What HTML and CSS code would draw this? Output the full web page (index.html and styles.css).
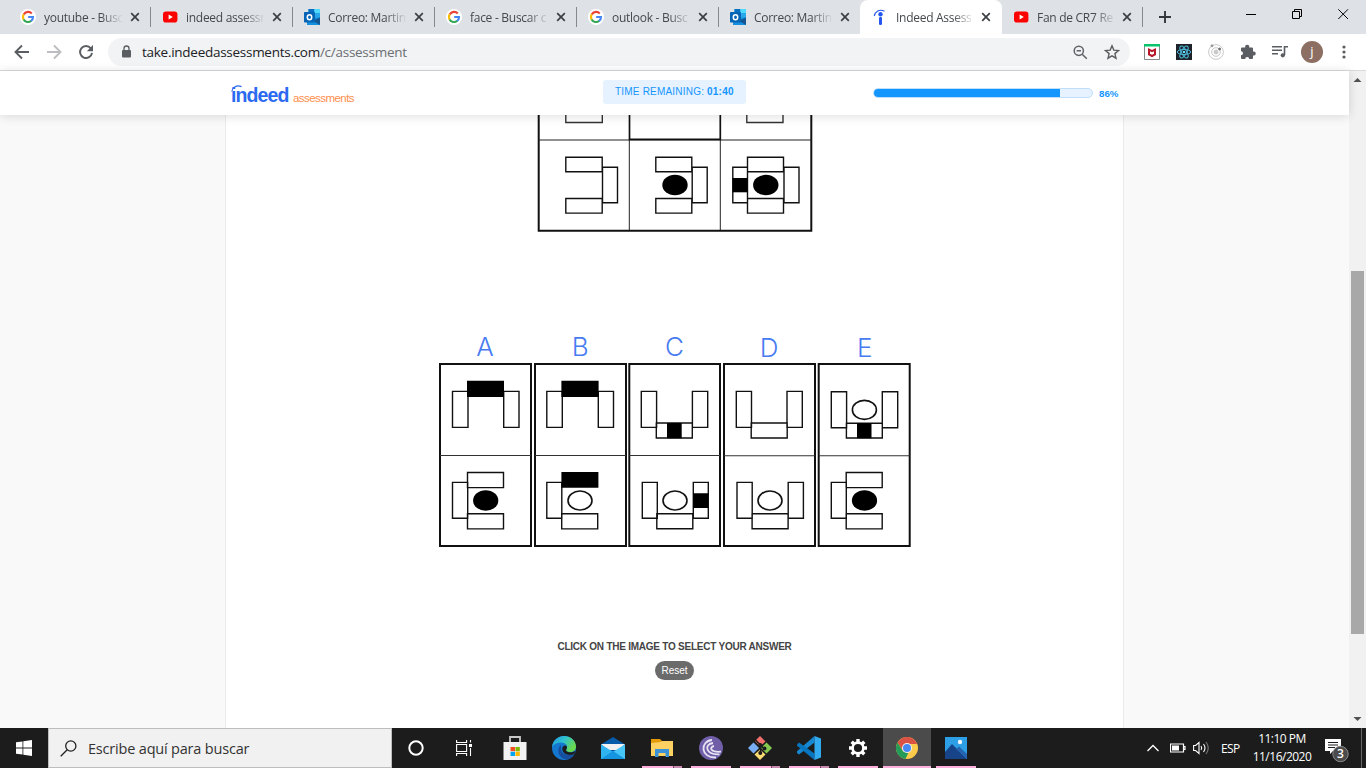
FILE: index.html
```html
<!DOCTYPE html>
<html lang="es">
<head>
<meta charset="utf-8">
<title>Indeed Assessments</title>
<link rel="stylesheet" href="styles.css">
</head>
<body>
<svg class="defs" width="0" height="0">
  <symbol id="google" viewBox="0 0 16 16">
    <circle cx="8" cy="8" r="8" fill="#fff"/>
    <g fill="none" stroke-width="2.1">
      <path d="M11.8 4.5A5 5 0 0 0 3.7 5.5" stroke="#ea4335"/>
      <path d="M3.7 5.4a5 5 0 0 0 0 5.2" stroke="#fbbc05"/>
      <path d="M3.6 10.4a5 5 0 0 0 7.7 1.4" stroke="#34a853"/>
      <path d="M8.2 8H13a5 5 0 0 1-1.9 4" stroke="#4285f4"/>
    </g>
  </symbol>
  <symbol id="youtube" viewBox="0 0 16 16">
    <rect x="1" y="2.6" width="14.4" height="11" rx="2.8" fill="#f00"/>
    <path d="M6.6 5.6v5L10.8 8.1z" fill="#fff"/>
  </symbol>
  <symbol id="outlook" viewBox="0 0 16 16">
    <path d="M4.5 0H16v13H4.5z" fill="#28a8ea"/>
    <path d="M4.5 0h6v4h-6z" fill="#0a6fc2"/><path d="M10.300 0H16v4h-5.700z" fill="#50d9ff"/>
    <path d="M4.500 4h6v4h-6z" fill="#0364b8"/>
    <path d="M3 8.500h13V16H3z" fill="#1490df"/><path d="M16 8.500V16L8.500 11.800z" fill="#123b6d" opacity=".65"/>
    <rect x="0" y="3" width="11" height="10.500" rx=".8" fill="#0664b5"/>
    <ellipse cx="5.500" cy="8.200" rx="2.200" ry="2.500" fill="none" stroke="#fff" stroke-width="1.500"/>
  </symbol>
  <symbol id="indeed" viewBox="0 0 16 16">
    <g fill="#2557f0"><circle cx="8.500" cy="5.200" r="2.200"/><rect x="7" y="8" width="3" height="8" rx="1.200"/></g>
    <path d="M2.300 7C3 2.500 7.500-.3 12.500 2.200" fill="none" stroke="#2557f0" stroke-width="1.200"/>
  </symbol>
  <symbol id="close" viewBox="0 0 10 10"><path d="M1.200 1.200l7.600 7.600M8.800 1.200L1.200 8.800" stroke="#3c4043" stroke-width="1.700" fill="none"/></symbol>
</svg>

<div class="tabstrip">
  <div class="tab"><svg class="favicon"><use href="#google"/></svg><span class="title">youtube - Busc</span><svg class="x"><use href="#close"/></svg></div>
  <div class="tab"><svg class="favicon"><use href="#youtube"/></svg><span class="title">indeed assessn</span><svg class="x"><use href="#close"/></svg></div>
  <div class="tab"><svg class="favicon"><use href="#outlook"/></svg><span class="title">Correo: Martin</span><svg class="x"><use href="#close"/></svg></div>
  <div class="tab"><svg class="favicon"><use href="#google"/></svg><span class="title">face - Buscar c</span><svg class="x"><use href="#close"/></svg></div>
  <div class="tab"><svg class="favicon"><use href="#google"/></svg><span class="title">outlook - Busc</span><svg class="x"><use href="#close"/></svg></div>
  <div class="tab plain"><svg class="favicon"><use href="#outlook"/></svg><span class="title">Correo: Martin</span><svg class="x"><use href="#close"/></svg></div>
  <div class="tab active"><svg class="favicon"><use href="#indeed"/></svg><span class="title">Indeed Assess</span><svg class="x"><use href="#close"/></svg></div>
  <div class="tab last"><svg class="favicon"><use href="#youtube"/></svg><span class="title">Fan de CR7 Re</span><svg class="x"><use href="#close"/></svg></div>
  <svg class="newtab" viewBox="0 0 12 12"><path d="M6 0v12M0 6h12" stroke="#35383b" stroke-width="1.900"/></svg>
  <div class="winbtns">
    <svg width="46" height="30" fill="none" stroke="#000"><path d="M18 14.500h10"/></svg>
    <svg width="46" height="30" fill="none" stroke="#000"><path d="M18.500 11.500h7v7h-7zM20.500 11.500v-2h7v7h-2"/></svg>
    <svg width="46" height="30" fill="none" stroke="#000"><path d="M18.300 9.300l9.700 9.700M28 9.300L18.300 19"/></svg>
  </div>
</div>

<div class="toolbar">
  <svg class="nav" width="96" height="36" viewBox="0 0 96 36" fill="none" stroke="#5a5d61" stroke-width="1.900">
    <path d="M29 18H16M22 11.500L15.500 18l6.500 6.500"/>
    <path d="M47 18h13M54 11.500l6.500 6.500-6.500 6.500" stroke="#bcbec1"/>
    <path d="M90.800 14.300A6 6 0 1 0 92 18.800"/><path d="M93 11v6.200h-6.200z" fill="#5a5d61" stroke="none"/>
  </svg>
  <div class="omnibox">
    <svg width="10" height="14" viewBox="0 0 10 14"><rect x="0" y="5" width="9" height="7.500" rx="1" fill="#5a5d61"/><path d="M2 5.500V3.500a2.500 2.500 0 0 1 5 0v2" fill="none" stroke="#5a5d61" stroke-width="1.300"/></svg>
    <span class="url">take.indeedassessments.com<i>/c/assessment</i></span>
    <svg class="zoomout" width="15" height="15" viewBox="0 0 15 15" fill="none" stroke="#5f6368" stroke-width="1.500"><circle cx="5.800" cy="5.800" r="4.600"/><path d="M9.200 9.200l4.600 4.600M3.600 5.800h4.400"/></svg>
    <svg class="star" width="16" height="16" viewBox="0 0 16 16" fill="none" stroke="#5a5d61" stroke-width="1.400"><path d="M8 1.800l1.800 4.300 4.700.4-3.600 3.100 1.100 4.600L8 11.800l-4 2.400 1.100-4.600-3.600-3.100 4.700-.4z"/></svg>
  </div>
  <div class="extensions">
    <svg width="16" height="16" viewBox="0 0 16 16"><path d="M.5 1v14.500h15V1" fill="#fff" stroke="#888"/><path d="M0 0h16v2.500H0z" fill="#08c46a"/><path d="M4 4l4 2 4-2v7l-4 2.300L4 11z" fill="#b9182b"/><path d="M6 7.200l2 1 2-1v2.600l-2 1-2-1z" fill="#fff"/></svg>
    <svg width="16" height="16" viewBox="0 0 16 16"><path d="M0 0h16v16H0z" fill="#1e2229"/><g fill="none" stroke="#4bb8da" stroke-width="1"><ellipse cx="8" cy="8" rx="6.700" ry="2.600"/><ellipse cx="8" cy="8" rx="6.700" ry="2.600" transform="rotate(60 8 8)"/><ellipse cx="8" cy="8" rx="6.700" ry="2.600" transform="rotate(120 8 8)"/></g><circle cx="8" cy="8" r="1.300" fill="#61dafb"/></svg>
    <svg width="16" height="16" viewBox="0 0 16 16" fill="none" stroke="#c9c9c9"><circle cx="8" cy="8" r="7.400"/><circle cx="8" cy="8" r="4.300"/><circle cx="8" cy="8" r="2" fill="#c9c9c9"/><circle cx="11.600" cy="5" r="1" fill="#666" stroke="#777"/><circle cx="4" cy="1.800" r="1" fill="#888" stroke="#999"/></svg>
    <svg width="16" height="16" viewBox="0 0 16 16" fill="#5a5d61"><path d="M1 4.500a1 1 0 0 1 1-1h3.200a2.100 2.100 0 1 1 4 0H12a1 1 0 0 1 1 1v3a2.100 2.100 0 1 1 0 4V14a1 1 0 0 1-1 1H9.200a2 2 0 1 0-4 0H2a1 1 0 0 1-1-1v-2.800a2 2 0 1 0 0-4z"/></svg>
    <svg width="16" height="16" viewBox="0 0 16 16" fill="none" stroke="#5a5d61" stroke-width="1.600"><path d="M0 2.800h10M0 6.300h10M0 9.800h6M12.500 11V2.800H16"/><circle cx="10.800" cy="11.300" r="2.100" fill="#5a5d61" stroke="none"/></svg>
    <span class="avatar">j</span>
    <svg class="dots" width="4" height="14" viewBox="0 0 4 14" fill="#5a5d61"><circle cx="2" cy="2" r="1.600"/><circle cx="2" cy="7" r="1.600"/><circle cx="2" cy="12" r="1.600"/></svg>
  </div>
</div>

<div class="viewport">
  <div class="page">
    <header class="topbar">
      <div class="logo"><svg class="swoosh" width="12" height="7" viewBox="0 0 12 7"><path d="M.7 6.500C1.500 2 5.500-.2 10.500 1.600" fill="none" stroke="#2a6af0" stroke-width="1.200"/></svg><b>indeed</b><span>assessments</span></div>
      <div class="timer">TIME REMAINING: <b>01:40</b></div>
      <div class="progress"><div class="track"><div class="fill" style="width:85.500%"></div></div><b>86%</b></div>
    </header>
    <main class="card">
      <svg class="matrix" width="280" height="119" viewBox="535 115 280 119" fill="none" stroke="#111" stroke-width="1.400">
        <path d="M538.700 114v116.700h272.600V114" stroke-width="2"/>
        <path d="M538 140h274M629.300 140v90M720.300 140v90" stroke="#222" stroke-width="1"/>
        <path d="M629.500 114v25.300h90.800V114" stroke-width="1.700"/>
        <path d="M565.800 114v8.500h36.500V114M746.800 114v8.500H783V114" stroke="#333"/>
        <path d="M565.800 157.200h36.400v14.500h-36.400zM602.500 167.200h15v35.500h-15zM565.800 198.500h36.400v14.600h-36.400z"/>
        <path d="M655.800 157.200h36v14.500h-36zM692.200 167.200h15v35.500h-15zM655.800 198.500h36v14.600h-36z"/>
        <path d="M747.500 157.200h36v14.500h-36zM784 167.200h15v35.500h-15zM747.500 198.500h36v14.600h-36zM732.800 167.200h14.700v35.500h-14.700z"/>
        <g fill="#000" stroke="none"><ellipse cx="675" cy="185" rx="12.700" ry="10.200"/><ellipse cx="765.800" cy="185" rx="12.700" ry="10.200"/><path d="M732.500 178h15v14.300h-15z"/></g>
      </svg>
      <svg class="answers" width="480" height="220" viewBox="435 330 480 220" fill="none" stroke="#111" stroke-width="1.400">
        <g class="letters" stroke="none" text-anchor="middle"><text x="485" y="356">A</text><text x="580.300" y="356">B</text><text x="674.500" y="356">C</text><text x="769" y="356.500">D</text><text x="864.800" y="356.500">E</text></g>
        <path d="M440 364h91v182h-91zM535 364h91v182h-91zM629.300 364h90.700v182h-90.700zM724 364h91v182h-91zM818.700 364h91v182h-91z" stroke-width="2"/>
        <path d="M440 455.500h91M535 455.500h91M629.300 455.500H720M724 455.800h91M818.700 455.800h91" stroke="#333" stroke-width="1.100"/>
        <path d="M452.500 391.400H468v36h-15.500zM503.700 391.400H519v36h-15.300zM452.500 482.400h15.200v35.900h-15.200zM467.500 472.500h36v15.100h-36zM467.500 513.700h36v15.200h-36z"/>
        <path d="M546.800 391.400h15.500v36h-15.500zM598.300 391.400h15.200v36h-15.200zM546.800 482.400h15v35.900h-15zM561.700 513.700h36v15.200h-36z"/>
        <path d="M641.300 391.400h15.300v36h-15.300zM692.400 391.400h15.300v36h-15.300zM656.300 423h36v15h-36zM642.300 482.400h15v35.900h-15zM656.800 513.700h36v15h-36zM693.300 482.400h15v35.900h-15z"/>
        <path d="M736.300 391.400h15.200v36h-15.200zM787 391.400h15.300v36H787zM751.200 423h36v15h-36zM737 482.400h15.200v35.900H737zM788.200 482.400h15.200v35.900h-15.200zM752.100 513.700h36v15h-36z"/>
        <path d="M831.300 391.700h15.300v36h-15.300zM882.300 391.700h15.400v36h-15.400zM846.400 423.300h35.900V438h-35.900zM831.300 482.400h15v35.900h-15zM846.200 472.500h36v15.100h-36zM846.200 513.700h36v15.200h-36z"/>
        <g stroke-width="1.600"><ellipse cx="580" cy="500.500" rx="12" ry="9.500"/><ellipse cx="675" cy="500.500" rx="12" ry="9.500"/><ellipse cx="770" cy="500.500" rx="12" ry="9.500"/><ellipse cx="864.400" cy="409.900" rx="12" ry="9.500"/></g>
        <g fill="#000" stroke="none"><path d="M467 380.700h37V397h-37zM561.400 380.700h37.200V397h-37.200zM561.400 472h37v15.800h-37zM667 423h14.700v15.200H667zM693.300 493.200h15v14.700h-15zM857 423.200h14.500v15H857z"/><ellipse cx="485.700" cy="500.500" rx="12.600" ry="10.200"/><ellipse cx="864.500" cy="500.500" rx="12.600" ry="10.200"/></g>
      </svg>
      <p class="hint">CLICK ON THE IMAGE TO SELECT YOUR ANSWER</p>
      <button class="reset">Reset</button>
    </main>
  </div>
  <div class="scrollbar">
    <svg width="17" height="17"><path d="M4.500 11h8L8.500 7z" fill="#505050"/></svg>
    <div class="thumb"></div>
    <svg class="down" width="17" height="17"><path d="M4.500 6h8l-4 4z" fill="#505050"/></svg>
  </div>
</div>

<div class="taskbar">
  <div class="cell"><svg width="16" height="16" viewBox="0 0 16 16" fill="#fff"><path d="M0 2.300l6.500-.9v6.200H0zM7.300 1.300L16 0v7.600H7.300zM0 8.400h6.500v6.200L0 13.700zM7.300 8.400H16V16l-8.700-1.300z"/></svg></div>
  <div class="search"><svg width="17" height="17" viewBox="0 0 17 17" fill="none" stroke="#222" stroke-width="1.300"><circle cx="10.800" cy="6" r="5.100"/><path d="M7.200 9.700L.7 16.200"/></svg><span>Escribe aquí para buscar</span></div>
  <div class="cell"><svg width="16" height="16"><circle cx="8" cy="8" r="6.700" fill="none" stroke="#fff" stroke-width="2"/></svg></div>
  <div class="cell"><svg width="16" height="16" fill="none" stroke="#fff" stroke-width="1.100"><path d="M.6 0v2.500h10V0M.6 4.500h10v7H.6zM.6 16v-2.500h10V16M14.500 0v2.500M14.500 8v8"/><path d="M13 4h3v3h-3z" fill="#fff" stroke="none"/></svg></div>
  <div class="apps">
    <div class="cell"><svg width="24" height="24" viewBox="0 0 24 24"><path d="M7 7V1h10v6" fill="none" stroke="#c9c9c9" stroke-width="1.800"/><path d="M.5 6h23v18H.5z" fill="#f2f2f2"/><path d="M7.500 11H12v4.200H7.500z" fill="#f25022"/><path d="M12.500 11h4.300v4.200h-4.300z" fill="#7fba00"/><path d="M7.500 15.800H12V20H7.500z" fill="#00a4ef"/><path d="M12.500 15.800h4.300V20h-4.300z" fill="#ffb900"/></svg></div>
    <div class="cell"><svg width="24" height="24" viewBox="0 0 24 24"><defs><linearGradient id="eg" x1="0" y1="0" x2="1" y2=".5"><stop offset="0" stop-color="#2295df"/><stop offset=".5" stop-color="#2fc3d0"/><stop offset="1" stop-color="#6bd84b"/></linearGradient></defs><circle cx="12" cy="12" r="12" fill="#1477d0"/><path d="M0 11C1 4 6 0 12 0c7 0 12 5 12 10.500 0 4-3 5.500-6 5.500-3 0-4.500-1.200-3.700-2.400C17 9.500 13 6.500 9 6.500 5 6.500 2 8 0 11z" fill="url(#eg)"/><path d="M9 9c-4 3-4.500 13 6 14.500 3-.5 6-2.500 7.500-5.500C16 21 9 17.500 9 13z" fill="#174f9e"/><path d="M14.300 13.600c-.8 1.300.7 2.700 4 2.700 2 0 3.500-.4 5-1.600l-1 3.300c-6 2.500-12-.5-12-5 0-2 1.200-3.500 2.700-3.500 2 0 2.600 2 1.300 4.100z" fill="#1c1c1c"/></svg></div>
    <div class="cell"><svg width="24" height="24" viewBox="0 0 24 24"><path d="M0 8.500L12 1l12 7.500v3L12 18 0 12z" fill="#075ba9"/><path d="M0 8h24l-6 6H6z" fill="#f1f1f1"/><path d="M0 8.500V23h24z" fill="#2fb3f1"/><path d="M24 8.500V23H0z" fill="#48c5f7"/><path d="M0 23l12-8 12 8z" fill="#1594e0"/></svg></div>
    <div class="cell running split"><svg width="24" height="24" viewBox="0 0 24 24"><path d="M1 3h9l2 2v3H1z" fill="#e59a08"/><path d="M1 7l10-1 1-1h11v15H1z" fill="#fdd263"/><path d="M5 21v-8h14v8h-3.500v-4h-7v4z" fill="#3b92d6"/></svg></div>
    <div class="cell running"><svg width="24" height="24" viewBox="0 0 24 24"><circle cx="12" cy="12" r="12" fill="#705fa8"/><g fill="none" stroke="#e8e4f3" stroke-width="1.800"><path d="M13 4C1 5 1 22 17 21.500M14 7C5 8 6 19 20.500 18.300M15 10c-5 1-4 6.500 7 5.700"/></g></svg></div>
    <div class="cell running split"><svg width="24" height="24" viewBox="0 0 24 24"><path d="M12 0l5.500 5.500-5.500 5-5-5.500z" fill="#f3716d"/><path d="M5.500 6.500L11 12l-5.500 5.500L0 12z" fill="#78adf4"/><path d="M18.500 6.500L24 12l-5.500 5.500L13 12z" fill="#86c94f"/><path d="M12 13.500l5.500 5L12 24l-5.500-5.500z" fill="#fbdc72"/><path d="M7 3.500l5.500 5.500v9M12.500 9l4 4" fill="none" stroke="#1d1d1d" stroke-width="1.500"/><g fill="#1d1d1d"><circle cx="12.300" cy="9" r="2"/><circle cx="12.300" cy="17" r="2"/><circle cx="16.500" cy="12.500" r="2"/></g></svg></div>
    <div class="cell running split"><svg width="24" height="24" viewBox="0 0 24 24"><path d="M17.500 0v6.500L2 18.500 0 17v-1.800z" fill="#1687d0"/><path d="M0 8.500L2 6.500l15.500 11V24L0 9.700z" fill="#0875bf"/><path d="M17.500 0L24 2.500v19L17.500 24z" fill="#32aaf0"/></svg></div>
    <div class="cell running"><svg width="20" height="20" viewBox="-10 -10 20 20"><g stroke="#fff" stroke-width="3.400"><path d="M0-9V-5M0 9V5M-9 0h4M9 0H5M-6.300-6.300l3 3M6.300-6.300l-3 3M-6.300 6.300l3-3M6.300 6.300l-3-3"/></g><circle r="5.400" fill="#1c1c1c" stroke="#fff" stroke-width="2.600"/></svg></div>
    <div class="cell running current"><svg width="22" height="22" viewBox="0 0 22 22"><circle cx="11" cy="11" r="11" fill="#fdcb4b"/><path d="M1.500 5.500a11 11 0 0 1 19 0L21 7H11l-4.500 6z" fill="#da5145"/><path d="M1.500 5.500L6.800 14l5.500 2L9.500 22A11 11 0 0 1 1.500 5.500z" fill="#249b57"/><circle cx="11" cy="11" r="5" fill="#f1f1f1"/><circle cx="11" cy="11" r="4" fill="#4688f4"/></svg></div>
    <div class="cell running"><svg width="22" height="22" viewBox="0 0 22 22"><path d="M0 0h22v22H0z" fill="#2d9fe6"/><path d="M0 15l7-8 15 15H0z" fill="#174489"/><path d="M11 12l3-2.500 8 7.500v5z" fill="#2464b0"/><circle cx="15" cy="5" r="2.200" fill="#f3f6fa"/></svg></div>
  </div>
  <div class="tray">
    <svg width="12" height="8" fill="none" stroke="#fff" stroke-width="1.300"><path d="M.5 7L6 1.500 11.500 7"/></svg>
    <svg class="battery" width="16" height="10"><path d="M.5 1h13v8H.5zM14 3.500h1v3h-1" fill="none" stroke="#fff" stroke-width="1.200"/><path d="M2 2.500h7v5H2z" fill="#fff"/></svg>
    <svg class="volume" width="17" height="14" fill="none" stroke="#fff" stroke-width="1.100"><path d="M.6 4.500h2L6 1.500v11L2.600 9.500h-2zM8 5q1.500 2 0 4M10.500 3q3 4 0 8"/><path d="M13 1q4.500 6 0 12" stroke="#777"/></svg>
    <span class="lang">ESP</span>
    <div class="clock"><span>11:10 PM</span><span class="date">11/16/2020</span></div>
    <svg class="action" width="26" height="26" viewBox="0 0 26 26"><path d="M0 1h16v12H8l-3 3v-3H0z" fill="#fff"/><path d="M3 4.500h10M3 7h10M3 9.500h7" stroke="#1c1c1c" stroke-width="1.100"/><circle cx="15.500" cy="16" r="7.700" fill="#4b4b4b" stroke="#8b8b8b"/><text x="15.500" y="20.200" text-anchor="middle">3</text></svg>
    <i class="peek"></i>
  </div>
</div>
</body>
</html>
```

FILE: styles.css
```css
* { box-sizing: border-box; }
body { margin: 0; width: 1366px; height: 768px; overflow: hidden; display: flex; flex-direction: column; font-family: "Open Sans", "Noto Sans", sans-serif; background: #fff; }
svg { display: block; flex: none; }
.defs { position: absolute; }

.tabstrip { height: 34px; flex: none; display: flex; background: #dee1e6; padding-left: 8px; }
.tab { position: relative; width: 142px; display: flex; align-items: center; padding-left: 12px; flex: none; }
.tab::after { content: ""; position: absolute; right: -1px; top: 7px; width: 1px; height: 20px; background: #85888c; }
.tab.plain::after, .tab.active::after { display: none; }
.tab.active { background: #fff; border-radius: 8px 8px 0 0; }
.tab.plain { border-bottom-right-radius: 8px; }
.tab.last { padding-left: 11px; width: 140px; }
.favicon { width: 16px; height: 16px; margin-right: 8px; }
.title { width: 79px; white-space: nowrap; font-size: 12px; letter-spacing: -.28px; color: #45494d; -webkit-mask-image: linear-gradient(90deg, #000 72%, transparent); mask-image: linear-gradient(90deg, #000 72%, transparent); }
.x { width: 10px; height: 10px; margin-left: 7px; }
.tab.last .x { margin-left: 6px; }
.tab.active .x { margin-left: 6px; }
.newtab { width: 12px; height: 12px; margin: 11px 0 0 17px; }
.winbtns { display: flex; margin-left: auto; }

.toolbar { height: 37px; flex: none; display: flex; align-items: flex-start; background: #fff; border-bottom: 1px solid #d9dadd; }
.omnibox { margin: 4px 0 0 12px; width: 1022px; height: 28px; border-radius: 14px; background: #f1f3f4; display: flex; align-items: center; padding-left: 14px; }
.url { margin-left: 10px; font-size: 13.500px; letter-spacing: -.270px; color: #202124; white-space: nowrap; }
.url i { font-style: normal; color: #6b6f73; }
.zoomout { margin-left: auto; }
.star { margin: 0 10px 0 16px; }
.extensions { display: flex; align-items: center; gap: 16px; height: 36px; padding-left: 14px; }
.avatar { width: 22px; height: 22px; border-radius: 50%; background: #8d6e63; color: #fff; font-size: 13px; line-height: 21px; text-align: center; margin-left: -3px; }
.dots { margin-left: 3px; }

.viewport { height: 657px; flex: none; display: flex; }
.page { position: relative; width: 1349px; background: #f9f9f9; font-family: "Liberation Sans", Arial, sans-serif; }
.topbar { position: relative; z-index: 1; height: 44px; display: grid; grid-template-columns: 603px 269.500px 1fr; align-items: start; background: #fff; box-shadow: 0 1px 10px rgba(0,0,0,.14); }
.logo { position: relative; padding-left: 231px; display: flex; align-items: baseline; height: 43px; padding-top: 13px; line-height: 22px; }
.swoosh { position: absolute; left: 231px; top: 14px; }
.logo b { color: #2a6af0; font-size: 19.500px; letter-spacing: -.9px; width: 62px; }
.logo span { color: #ff8f4c; font-size: 11.500px; letter-spacing: -.550px; }
.timer { width: 143px; height: 24px; margin-top: 9px; border-radius: 3px; background: #e6f2ff; color: #1596ff; font-size: 10px; line-height: 24px; letter-spacing: .2px; padding-left: 12px; white-space: nowrap; }
.progress { display: flex; align-items: center; height: 10px; margin-top: 17px; color: #1596ff; font-size: 9.700px; }
.track { width: 220.500px; height: 10px; border: 1px solid #bfdffc; border-radius: 5px; overflow: hidden; background: #e6f2ff; margin-right: 6px; }
.fill { height: 100%; background: #1596ff; }
.card { width: 899px; height: 613px; margin-left: 225px; background: #fff; border: solid #ebebeb; border-width: 0 1px; display: flex; flex-direction: column; align-items: center; }
.matrix { margin-left: 1px; }
.answers { margin: 96px 0 0 1px; }
.letters { font: 300 26px Inter, sans-serif; fill: #477bf2; }
.hint { margin: 91px 0 0; font-size: 10px; line-height: 12px; letter-spacing: -.240px; font-weight: bold; color: #444; white-space: nowrap; }
.reset { margin-top: 8px; width: 39px; height: 19px; padding: 0 0 1px; border: 0; border-radius: 10px; background: #6b6b6b; color: #fff; font: 10px "Liberation Sans", Arial, sans-serif; }
.scrollbar { width: 17px; background: #f1f1f1; display: flex; flex-direction: column; align-items: center; }
.thumb { width: 13px; height: 363px; margin-top: 183px; background: #a8a8a8; }
.down { margin-top: auto; }

.taskbar { height: 40px; flex: none; display: flex; background: #1c1c1c; color: #fff; }
.cell { position: relative; width: 48px; height: 40px; display: flex; align-items: center; justify-content: center; flex: none; }
.search { width: 344px; height: 40px; background: #f1f1f1; border: 1px solid #bdbdbd; display: flex; align-items: center; padding-left: 11px; color: #333; font-size: 14.500px; }
.search span { margin-left: 11px; letter-spacing: -.190px; white-space: nowrap; }
.apps { display: flex; gap: 1px; margin-left: 3px; }
.running::after { content: ""; position: absolute; left: 4px; bottom: 0; width: 40px; height: 2px; background: #ffb0dc; }
.split::after { background: linear-gradient(90deg, #ffb0dc 31px, #694b5c 31px, #694b5c 32px, #c98aaf 32px); }
.current { background: #4b4b4b; }
.current::after { left: 0; width: 48px; }
.tray { margin-left: auto; display: flex; align-items: center; padding-right: 4px; }
.battery { margin-left: 11px; }
.volume { margin-left: 7px; }
.lang { margin-left: 11px; width: 20px; font-size: 12px; letter-spacing: -.6px; }
.clock { margin-left: 11px; width: 60px; display: flex; flex-direction: column; align-items: center; font-size: 12px; line-height: 18px; letter-spacing: -.5px; white-space: nowrap; }
.action { margin: 6px 0 0 13px; }
.action text { font-size: 12px; font-weight: 600; fill: #fff; }
.peek { width: 1px; height: 40px; background: #666; margin-left: 10px; }
```
